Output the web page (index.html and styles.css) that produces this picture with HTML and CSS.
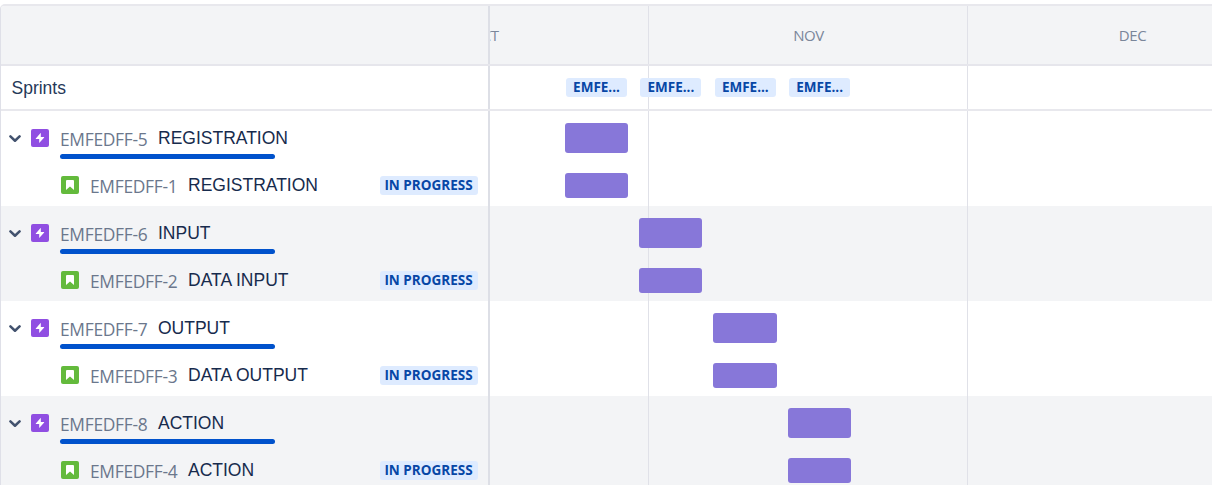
FILE: index.html
```html
<!DOCTYPE html>
<html lang="en">
<head>
<meta charset="utf-8">
<title>Roadmap</title>
<link rel="stylesheet" href="styles.css">
</head>
<body>
<svg width="0" height="0" class="sprite" aria-hidden="true">
  <symbol id="chevron" viewBox="0 0 10 8"><path d="M1.2 2 L5 5.6 L8.8 2" fill="none" stroke="#42526e" stroke-width="2.1" stroke-linecap="round" stroke-linejoin="round"/></symbol>
  <symbol id="epic" viewBox="0 0 18 18"><rect width="18" height="18" rx="2" fill="#904ee2"/><path d="M9.8 3.8 L4.8 9.4 Q4.5 10 5.2 10.1 H8.2 V14 L13.2 8.6 Q13.5 8 12.8 7.9 H9.8 Z" fill="#fff"/></symbol>
  <symbol id="story" viewBox="0 0 18 18"><rect width="18" height="18" rx="2" fill="#63ba3c"/><path d="M5 5 Q5 4 6 4 H12 Q13 4 13 5 V14 L9 10.4 L5 14 Z" fill="#fff"/></symbol>
</svg>
<main class="board">
  <div class="row head">
    <div class="side"></div>
    <div class="lane months"><span class="month oct"><i>OCT</i></span><span class="month nov">NOV</span><span class="month dec">DEC</span></div>
  </div>
  <div class="row sprints">
    <div class="side"><span class="label">Sprints</span></div>
    <div class="lane"><span class="lozenge sprint">EMFE...</span><span class="lozenge sprint">EMFE...</span><span class="lozenge sprint">EMFE...</span><span class="lozenge sprint">EMFE...</span></div>
  </div>
  <section class="group g1">
    <div class="row epic">
      <div class="side"><svg class="chevron"><use href="#chevron"/></svg><svg class="icon"><use href="#epic"/></svg><div class="info"><div class="line"><span class="key">EMFEDFF-5</span><span class="title">REGISTRATION</span></div><div class="progress"></div></div></div>
      <div class="lane"><div class="bar"></div></div>
    </div>
    <div class="row story">
      <div class="side"><svg class="icon"><use href="#story"/></svg><span class="key">EMFEDFF-1</span><span class="title">REGISTRATION</span><span class="lozenge status">IN PROGRESS</span></div>
      <div class="lane"><div class="bar"></div></div>
    </div>
  </section>
  <section class="group g2 alt">
    <div class="row epic">
      <div class="side"><svg class="chevron"><use href="#chevron"/></svg><svg class="icon"><use href="#epic"/></svg><div class="info"><div class="line"><span class="key">EMFEDFF-6</span><span class="title">INPUT</span></div><div class="progress"></div></div></div>
      <div class="lane"><div class="bar"></div></div>
    </div>
    <div class="row story">
      <div class="side"><svg class="icon"><use href="#story"/></svg><span class="key">EMFEDFF-2</span><span class="title">DATA INPUT</span><span class="lozenge status">IN PROGRESS</span></div>
      <div class="lane"><div class="bar"></div></div>
    </div>
  </section>
  <section class="group g3">
    <div class="row epic">
      <div class="side"><svg class="chevron"><use href="#chevron"/></svg><svg class="icon"><use href="#epic"/></svg><div class="info"><div class="line"><span class="key">EMFEDFF-7</span><span class="title">OUTPUT</span></div><div class="progress"></div></div></div>
      <div class="lane"><div class="bar"></div></div>
    </div>
    <div class="row story">
      <div class="side"><svg class="icon"><use href="#story"/></svg><span class="key">EMFEDFF-3</span><span class="title">DATA OUTPUT</span><span class="lozenge status">IN PROGRESS</span></div>
      <div class="lane"><div class="bar"></div></div>
    </div>
  </section>
  <section class="group g4 alt">
    <div class="row epic">
      <div class="side"><svg class="chevron"><use href="#chevron"/></svg><svg class="icon"><use href="#epic"/></svg><div class="info"><div class="line"><span class="key">EMFEDFF-8</span><span class="title">ACTION</span></div><div class="progress"></div></div></div>
      <div class="lane"><div class="bar"></div></div>
    </div>
    <div class="row story">
      <div class="side"><svg class="icon"><use href="#story"/></svg><span class="key">EMFEDFF-4</span><span class="title">ACTION</span><span class="lozenge status">IN PROGRESS</span></div>
      <div class="lane"><div class="bar"></div></div>
    </div>
  </section>
</main>
</body>
</html>
```
FILE: styles.css
```css
* { box-sizing: border-box; }
html, body { height: 100%; }
body {
  margin: 0;
  padding-top: 4px;
  overflow: hidden;
  background: #fff;
  font-family: "Open Sans", "Noto Sans", sans-serif;
}
.sprite { display: none; }
.board {
  width: 1214px;
  height: 481px;
  overflow: hidden;
  border-top: 2px solid #e8e8ed;
  border-left: 1px solid #dfe0e8;
  border-top-left-radius: 5px;
}
.row { display: flex; }
.side {
  display: flex;
  flex: none;
  width: 489px;
  border-right: 2px solid #dddfe6;
}
.lane {
  display: flex;
  flex: 1;
  min-width: 0;
  background-image: linear-gradient(#e0e1e8, #e0e1e8), linear-gradient(#e0e1e8, #e0e1e8);
  background-size: 1px 100%;
  background-position: 158px 0, 477px 0;
  background-repeat: no-repeat;
}
.head { height: 60px; background-color: #f3f4f6; border-bottom: 2px solid #e6e6ec; }
.months { align-items: center; color: #7a869a; font-size: 15px; letter-spacing: -0.4px; line-height: 20px; }
.month { flex: none; text-align: center; }
.oct { width: 158px; display: flex; overflow: hidden; }
.oct i { font-style: normal; margin-left: -19.5px; }
.nov { width: 321px; }
.dec { width: 327px; }
.sprints { height: 45px; border-bottom: 2px solid #e8e8ed; }
.sprints .side { align-items: center; padding-left: 10.5px; }
.sprints .lane { align-items: center; padding-left: 76px; gap: 13.4px; }
.label { font: 17.5px/22px "Liberation Sans", sans-serif; color: #253858; }
.lozenge {
  flex: none;
  height: 19px;
  border-radius: 3px;
  background: #deebff;
  color: #0747a6;
  font-size: 13.5px;
  font-weight: 700;
  line-height: 19px;
  text-align: center;
  white-space: nowrap;
}
.sprint { width: 61px; line-height: 18px; }
.status { width: 98px; margin-left: auto; margin-right: 10.5px; }
.alt { background-color: #f3f4f6; }
.epic { height: 55px; }
.story { height: 40px; }
.epic .side { padding: 18px 0 0 8px; }
.story .side { padding: 8px 0 0 60px; align-items: flex-start; }
.story .side .icon { margin-top: 2px; }
.story .side .status { margin-top: 2px; line-height: 18px; }
.chevron { flex: none; width: 12px; height: 9.6px; margin: 5px 10px 0 0; }
.icon { flex: none; width: 18px; height: 18px; }
.info { margin-left: 11px; }
.line { display: flex; height: 25px; }
.key, .title { white-space: nowrap; line-height: 22px; }
.key {
  flex: none;
  width: 98px;
  font-size: 17.4px;
  letter-spacing: -0.3px;
  color: #6b778c;
}
.epic .key { margin-top: -1px; }
.epic .title { margin-top: -2px; }
.story .key { margin-left: 11px; margin-top: 1px; }
.title { font-family: "Liberation Sans", sans-serif; font-size: 17.5px; color: #172b4d; }
.progress { width: 215px; height: 5px; border-radius: 3px; background: #0052cc; }
.bar { width: 63.5px; border-radius: 3px; background: #8777d9; }
.epic .bar { height: 30px; margin-top: 12px; }
.story .bar { height: 25px; margin-top: 7px; }
.g1 .lane { padding-left: 74.5px; }
.g2 .lane { padding-left: 148.8px; }
.g3 .lane { padding-left: 223.1px; }
.g4 .lane { padding-left: 297.6px; }
```
